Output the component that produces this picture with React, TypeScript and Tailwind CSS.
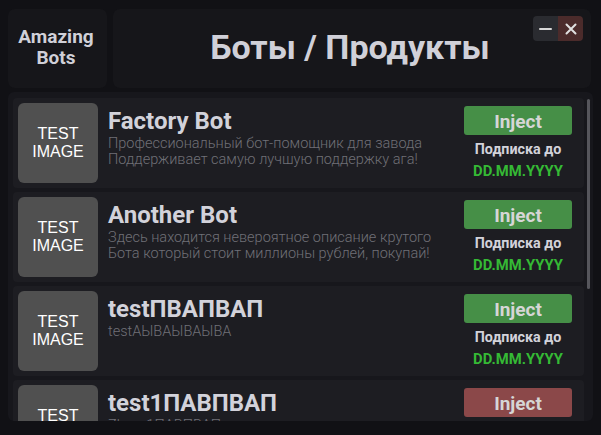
const bots = [
  {
    name: "Factory Bot",
    desc: ["Профессиональный бот-помощник для завода", "Поддерживает самую лучшую поддержку ага!"],
    active: true,
  },
  {
    name: "Another Bot",
    desc: ["Здесь находится невероятное описание крутого", "Бота который стоит миллионы рублей, покупай!"],
    active: true,
  },
  { name: "testПВАПВАП", desc: ["testАЫВАЫВАЫВА"], active: true },
  { name: "test1ПАВПВАП", desc: ["Zbyxa1ПАВПВАП"], active: false },
];

function BotRow({ bot }: { bot: (typeof bots)[number] }) {
  return (
    <div className="flex h-[90px] shrink-0 gap-[10px] rounded-[4px] bg-[#1d1d22] p-[5px] pr-[12px]">
      <div className="flex h-[80px] w-[80px] shrink-0 items-center justify-center rounded-[6px] bg-[#505050] text-center font-['Liberation_Sans',sans-serif] text-[16px] leading-[18px] text-white">
        TEST
        <br />
        IMAGE
      </div>
      <div className="min-w-0 flex-1 pt-[4px]">
        <div className="text-[24px] font-bold leading-[29px] text-[#d2d2da]">{bot.name}</div>
        <div className="text-[14.5px] font-light leading-[16px] text-[#707077]">
          {bot.desc.map((d) => (
            <div key={d} className="whitespace-nowrap">
              {d}
            </div>
          ))}
        </div>
      </div>
      <div className="flex w-[108px] shrink-0 flex-col items-center pt-[3px]">
        <button
          type="button"
          className={
            bot.active
              ? "h-[29px] w-[108px] rounded-[3px] bg-[#468f47] pt-[2px] text-[19px] font-bold text-[#d6d6d6]"
              : "h-[29px] w-[108px] rounded-[3px] bg-[#8b4849] pt-[2px] text-[19px] font-bold text-[#d6d6d6]"
          }
        >
          Inject
        </button>
        <div className="mt-[6px] text-[14.3px] font-bold leading-[17px] text-[#d2d2da]">Подписка до</div>
        <div className="mt-[5px] text-[14.8px] font-bold leading-[17px] text-[#35b935]">DD.MM.YYYY</div>
      </div>
    </div>
  );
}

export default function App() {
  return (
    <div className="flex h-[435px] w-[601px] flex-col gap-[4px] overflow-hidden bg-[#111115] px-[8px] pt-[9px] font-['Roboto',sans-serif]">
      <div className="flex h-[79px] shrink-0 gap-[6px] pr-[2px]">
        <div className="flex w-[99px] items-center justify-center rounded-[7px] bg-[#16161a] pb-[3px] pr-[3px] text-center text-[19px] font-bold leading-[21px] text-[#d0d0d8]">
          Amazing
          <br />
          Bots
        </div>
        <div className="relative flex flex-1 items-center justify-center rounded-[7px] bg-[#16161a] pb-[3px] pr-[4px]">
          <h1 className="text-[34px] font-bold text-[#d0d0d8]">Боты / Продукты</h1>
          <div className="absolute right-[8px] top-[7px] flex overflow-hidden rounded-[4px]">
            <div className="flex h-[25px] w-[25px] items-center justify-center bg-[#2a2b30]">
              <div className="h-[2px] w-[13px] rounded bg-[#d8d8d8]" />
            </div>
            <div className="flex h-[25px] w-[25px] items-center justify-center bg-[#4b2b2b]">
              <svg width="12" height="12" viewBox="0 0 12 12" stroke="#e0e0e0" strokeWidth="2" strokeLinecap="round">
                <path d="M1.5 1.5l9 9M10.5 1.5l-9 9" />
              </svg>
            </div>
          </div>
        </div>
      </div>
      <div className="flex h-[329px] shrink-0 gap-[3px] overflow-hidden rounded-[6px] bg-[#17171c] pl-[5px] pr-[2px] pt-[6px]">
        <div className="flex flex-1 flex-col gap-[4px] overflow-hidden">
          {bots.map((b) => (
            <BotRow key={b.name} bot={b} />
          ))}
        </div>
        <div className="w-[4px] shrink-0 pt-[1px]">
          <div className="h-[190px] w-[3px] rounded-full bg-[#56565c]" />
        </div>
      </div>
    </div>
  );
}
